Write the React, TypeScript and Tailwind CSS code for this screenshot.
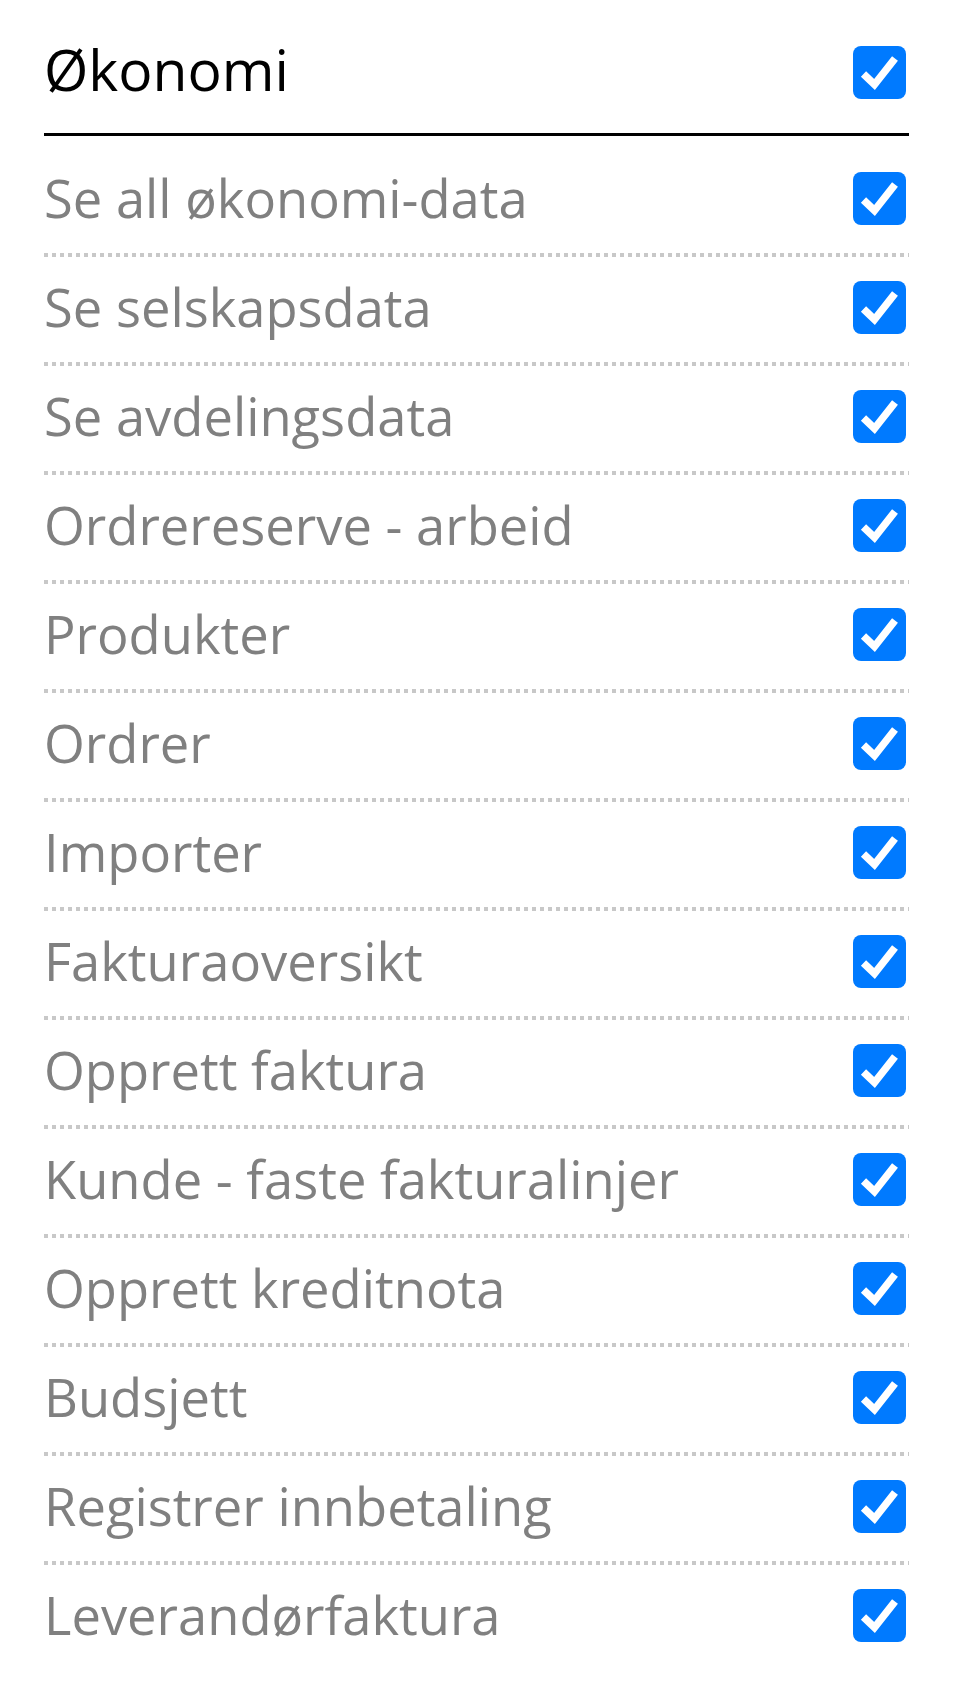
import React from "react";

const items = [
  "Se all økonomi-data",
  "Se selskapsdata",
  "Se avdelingsdata",
  "Ordrereserve - arbeid",
  "Produkter",
  "Ordrer",
  "Importer",
  "Fakturaoversikt",
  "Opprett faktura",
  "Kunde - faste fakturalinjer",
  "Opprett kreditnota",
  "Budsjett",
  "Registrer innbetaling",
  "Leverandørfaktura",
];

function Check() {
  return (
    <svg width="53" height="53" viewBox="0 0 53 53" className="shrink-0">
      <rect x="0" y="0" width="53" height="53" rx="8" fill="#007AFF" />
      <polyline
        points="10.5,28 21.5,38.5 42,12.5"
        fill="none"
        stroke="#fff"
        strokeWidth="7.5"
        strokeLinecap="butt"
        strokeLinejoin="miter"
      />
    </svg>
  );
}

export default function App() {
  return (
    <div className="w-[956px] min-h-[1700px] bg-white pl-[44px] pr-[50px] pt-[46px] font-['Open_Sans',sans-serif]">
      <div className="flex h-[53px] items-center justify-between">
        <span className="pb-[6px] text-[57px] leading-none text-black">Økonomi</span>
        <Check />
      </div>
      <div className="mt-[34px] h-[3px] w-[865px] bg-black" />
      <div className="pt-[12px]">
        {items.map((label, i) => (
          <div key={label}>
            <div className="flex h-[105px] items-center justify-between pb-[5px]">
              <span className="text-[52.5px] leading-none text-[#808080]">{label}</span>
              <Check />
            </div>
            {i < items.length - 1 && (
              <div className="h-[4px] w-[865px] bg-[linear-gradient(to_right,#c8c8c8_50%,transparent_50%)] bg-[length:8px_4px]" />
            )}
          </div>
        ))}
      </div>
    </div>
  );
}
